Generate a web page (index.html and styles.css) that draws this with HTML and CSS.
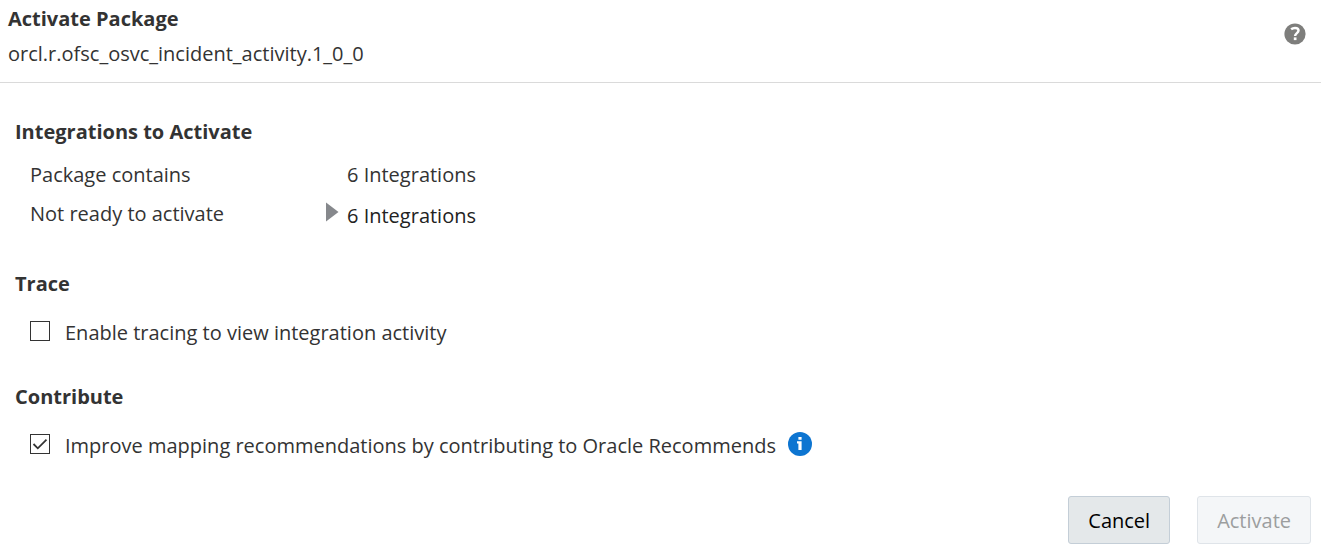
FILE: index.html
```html
<!DOCTYPE html>
<html lang="en">
<head>
<meta charset="utf-8">
<meta name="viewport" content="width=device-width, initial-scale=1">
<title>Activate Package</title>
<link rel="stylesheet" href="styles.css">
</head>
<body>
<form class="dialog">
  <header class="dialog-header">
    <div>
      <h1 class="title">Activate Package</h1>
      <p class="package">orcl.r.ofsc_osvc_incident_activity.1_0_0</p>
    </div>
    <button class="icon-button help" type="button" aria-label="Help">
      <svg width="22" height="22" viewBox="0 0 22 22" aria-hidden="true">
        <circle cx="11" cy="11" r="10.6" fill="#7e7e7c"/>
        <path d="M7.1 6.2C8.3 5.3 9.6 4.9 11 4.9c2.2 0 3.5 1 3.5 2.7 0 2.5-3.4 2.6-3.4 5.5" fill="none" stroke="#fff" stroke-width="2.5"/>
        <rect x="9.8" y="14.4" width="2.7" height="2.7" fill="#fff"/>
      </svg>
    </button>
  </header>
  <main class="content">
    <section class="section">
      <h2 class="heading">Integrations to Activate</h2>
      <dl class="summary">
        <dt>Package contains</dt>
        <dd>6 Integrations</dd>
        <dt>Not ready to activate</dt>
        <dd>
          <button class="disclosure" type="button" aria-expanded="false">
            <svg width="13" height="20" viewBox="0 0 13 20" aria-hidden="true"><path d="M0 0.5L12.5 10L0 19.5Z" fill="#86888c"/></svg>
            <span class="disclosure-text">6 Integrations</span>
          </button>
        </dd>
      </dl>
    </section>
    <section class="section">
      <h2 class="heading">Trace</h2>
      <div class="option">
        <input class="check" type="checkbox" id="trace">
        <label class="option-label" for="trace">Enable tracing to view integration activity</label>
      </div>
    </section>
    <section class="section">
      <h2 class="heading">Contribute</h2>
      <div class="option">
        <input class="check" type="checkbox" id="contribute" checked>
        <label class="option-label" for="contribute">Improve mapping recommendations by contributing to Oracle Recommends</label>
        <button class="icon-button" type="button" aria-label="More information">
          <svg width="24" height="24" viewBox="0 0 24 24" aria-hidden="true">
            <circle cx="12" cy="12" r="12" fill="#0d75d1"/>
            <path d="M10.4 5h3.2v2.7h-3.2zM9 9.3h4.6V18h-3.2v-6.6H9z" fill="#fff"/>
          </svg>
        </button>
      </div>
    </section>
  </main>
  <footer class="actions">
    <button class="button" type="button">Cancel</button>
    <button class="button" type="submit" disabled>Activate</button>
  </footer>
</form>
</body>
</html>
```

FILE: styles.css
```css
* {
  box-sizing: border-box;
}

body {
  margin: 0;
  background: #fff;
  color: #333;
  font: 20px/28px "Open Sans", "Noto Sans", sans-serif;
}

h1, h2, p, dl, dd {
  margin: 0;
}

button {
  font: inherit;
  color: inherit;
}

.dialog-header {
  display: flex;
  justify-content: space-between;
  align-items: center;
  padding: 5px 15px 14px 8px;
  border-bottom: 1px solid #dadada;
}

.title, .heading {
  font-size: 20px;
  font-weight: 700;
  line-height: 28px;
}

.title {
  margin-bottom: 7px;
}

.icon-button {
  display: flex;
  padding: 0;
  border: 0;
  background: none;
}

.help {
  margin-bottom: 6px;
}

.content {
  display: flex;
  flex-direction: column;
  gap: 36px;
  padding: 35px 15px 0;
}

.summary {
  display: grid;
  grid-template-columns: 296px 1fr;
  row-gap: 11px;
  padding: 15px 15px 4px;
}

.summary dd {
  padding-left: 21px;
}

.disclosure {
  display: flex;
  align-items: flex-start;
  gap: 8px;
  margin-left: -21px;
  padding: 2px 0 0;
  border: 0;
  background: none;
  color: #222;
}

.option {
  display: flex;
  align-items: center;
  padding: 17px 15px 0;
}

.option-label {
  padding: 4px 12px 0 15px;
}

.check {
  appearance: none;
  flex: none;
  width: 20px;
  height: 20px;
  margin: 0;
  border: 1px solid #333;
  background: #fff;
}

.check:checked {
  background: url("data:image/svg+xml,%3Csvg xmlns='http://www.w3.org/2000/svg' viewBox='0 0 18 18'%3E%3Cpath d='M2.5 9l4.3 4.3L15.5 4.7' fill='none' stroke='%23333' stroke-width='1.8'/%3E%3C/svg%3E") center / 18px 18px;
}

.actions {
  display: flex;
  justify-content: flex-end;
  gap: 27px;
  padding: 36px 10px 14px;
}

.button {
  padding: 10px 19px 8px;
  border: 1px solid #c4ced7;
  border-radius: 3px;
  background: #e4e8ea;
  color: #000;
}

.button:disabled {
  border-color: #dfe4e9;
  background: #f4f6f8;
  color: #9c9e9f;
}
```
